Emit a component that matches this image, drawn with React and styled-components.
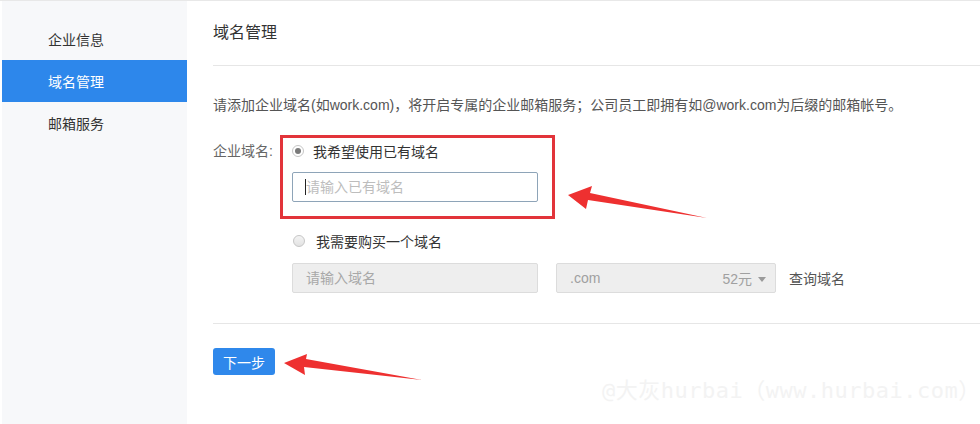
import React from "react";
import styled, { createGlobalStyle } from "styled-components";

const Global = createGlobalStyle`
  html, body { margin: 0; padding: 0; background: #fff; }
  body { font-family: "Liberation Sans", "Noto Sans CJK SC", sans-serif; color: #333; }
  * { box-sizing: border-box; }
`;

const Page = styled.div`
  position: relative;
  display: flex;
  width: 980px;
  height: 424px;
  padding-left: 2px;
  border-top: 1px solid #e8e8e8;
  overflow: hidden;
`;

const Sidebar = styled.nav`
  width: 185px;
  flex-shrink: 0;
  background: #f7f8fa;
  padding-top: 17px;
  display: flex;
  flex-direction: column;
`;

const NavItem = styled.div`
  height: 42px;
  display: flex;
  align-items: center;
  padding-left: 46px;
  font-size: 14px;
  color: ${(p) => (p.$active ? "#fff" : "#333")};
  background: ${(p) => (p.$active ? "#2d87eb" : "transparent")};
`;

const Main = styled.main`
  flex: 1;
  padding-left: 26px;
  display: flex;
  flex-direction: column;
`;

const Header = styled.div`
  height: 65px;
  border-bottom: 1px solid #e6e6e6;
  padding-top: 20px;
  font-size: 16px;
  line-height: 24px;
  color: #333;
`;

const Desc = styled.p`
  margin: 29px 0 0;
  font-size: 14px;
  line-height: 20px;
  color: #555;
`;

const FormRow = styled.div`
  display: flex;
  margin-top: 26px;
`;

const Label = styled.div`
  width: 79px;
  flex-shrink: 0;
  font-size: 14px;
  line-height: 20px;
  color: #666;
`;

const Options = styled.div`
  display: flex;
  flex-direction: column;
  align-items: flex-start;
`;

const Highlighted = styled.div`
  position: relative;
  display: flex;
  flex-direction: column;
  gap: 11px;
  &::before {
    content: "";
    position: absolute;
    left: -12px;
    top: -6px;
    right: -17px;
    bottom: -17px;
    border: 3px solid #e2343a;
    pointer-events: none;
  }
`;

const RadioRow = styled.label`
  display: flex;
  align-items: center;
  height: 20px;
  gap: ${(p) => p.$gap || 9}px;
  font-size: 14px;
  color: #333;
  margin-top: ${(p) => p.$mt || 0}px;
`;

const RadioDot = styled.span`
  width: 12px;
  height: 12px;
  border-radius: 50%;
  border: 1px solid #c6c6c6;
  background: ${(p) => (p.$checked ? "#fff" : "linear-gradient(#f4f4f4, #e2e2e2)")};
  display: flex;
  align-items: center;
  justify-content: center;
  margin-left: ${(p) => p.$ml || 0}px;
  &::after {
    content: "";
    display: ${(p) => (p.$checked ? "block" : "none")};
    width: 6px;
    height: 6px;
    border-radius: 50%;
    background: #7a7a7a;
  }
`;

const InputWrap = styled.div`
  position: relative;
  width: 246px;
  height: 30px;
`;

const TextInput = styled.input`
  width: 100%;
  height: 100%;
  border: 1px solid ${(p) => (p.disabled ? "#dcdcdc" : "#8ea4b8")};
  border-radius: 2px;
  background: ${(p) => (p.disabled ? "#eeeeee" : "#fff")};
  padding: 0 13px;
  font-family: inherit;
  font-size: 14px;
  outline: none;
  &::placeholder { color: ${(p) => (p.disabled ? "#a8a8a8" : "#bdbdbd")}; }
`;

const Caret = styled.span`
  position: absolute;
  left: 13px;
  top: 7px;
  width: 1px;
  height: 16px;
  background: #222;
`;

const BuyRow = styled.div`
  display: flex;
  align-items: center;
  margin-top: 12px;
`;

const Select = styled.div`
  width: 220px;
  height: 30px;
  margin-left: 18px;
  border: 1px solid #dcdcdc;
  border-radius: 2px;
  background: #eeeeee;
  display: flex;
  align-items: center;
  justify-content: space-between;
  padding: 0 9px 0 13px;
  font-size: 14px;
  color: #a0a0a0;
`;

const Price = styled.span`
  display: flex;
  align-items: center;
  gap: 6px;
  &::after {
    content: "";
    border-left: 4px solid transparent;
    border-right: 4px solid transparent;
    border-top: 5px solid #9a9a9a;
    margin-top: 2px;
  }
`;

const QueryLink = styled.span`
  margin-left: 13px;
  font-size: 14px;
  color: #555;
`;

const Divider = styled.div`
  margin-top: 30px;
  height: 1px;
  background: #e6e6e6;
`;

const Button = styled.button`
  margin-top: 24px;
  width: 62px;
  height: 27px;
  border: none;
  border-radius: 3px;
  background: #2f88eb;
  color: #fff;
  font-family: inherit;
  font-size: 14px;
  padding: 0;
`;

const Watermark = styled.div`
  position: absolute;
  left: 602px;
  top: 376px;
  font-family: "DejaVu Sans Mono", "Noto Sans CJK SC", monospace;
  font-size: 22px;
  line-height: 28px;
  letter-spacing: 0.5px;
  color: #f3f3f3;
  white-space: nowrap;
  pointer-events: none;
`;

const Annotations = styled.svg`
  position: absolute;
  left: 0;
  top: 0;
  pointer-events: none;
`;

export default function App() {
  return (
    <>
      <Global />
      <Page>
        <Sidebar>
          <NavItem>企业信息</NavItem>
          <NavItem $active>域名管理</NavItem>
          <NavItem>邮箱服务</NavItem>
        </Sidebar>
        <Main>
          <Header>域名管理</Header>
          <Desc>请添加企业域名(如work.com)，将开启专属的企业邮箱服务；公司员工即拥有如@work.com为后缀的邮箱帐号。</Desc>
          <FormRow>
            <Label>企业域名:</Label>
            <Options>
              <Highlighted>
                <RadioRow>
                  <RadioDot $checked />
                  我希望使用已有域名
                </RadioRow>
                <InputWrap>
                  <TextInput placeholder="请输入已有域名" />
                  <Caret />
                </InputWrap>
              </Highlighted>
              <RadioRow $mt={29} $gap={11}>
                <RadioDot $ml={1} />
                我需要购买一个域名
              </RadioRow>
              <BuyRow>
                <InputWrap>
                  <TextInput disabled placeholder="请输入域名" />
                </InputWrap>
                <Select>
                  <span>.com</span>
                  <Price>52元</Price>
                </Select>
                <QueryLink>查询域名</QueryLink>
              </BuyRow>
            </Options>
          </FormRow>
          <Divider />
          <div>
            <Button>下一步</Button>
          </div>
        </Main>
        <Watermark>@大灰hurbai（www.hurbai.com）</Watermark>
        <Annotations width="980" height="424" viewBox="0 0 980 424">
          <polygon points="568,194 592,185 590,192 707,217 588,199 586,208" fill="#ee3030" />
          <polygon points="284,362 307,353 306,358 422,379 304,366 305,374" fill="#ee3030" />
        </Annotations>
      </Page>
    </>
  );
}
